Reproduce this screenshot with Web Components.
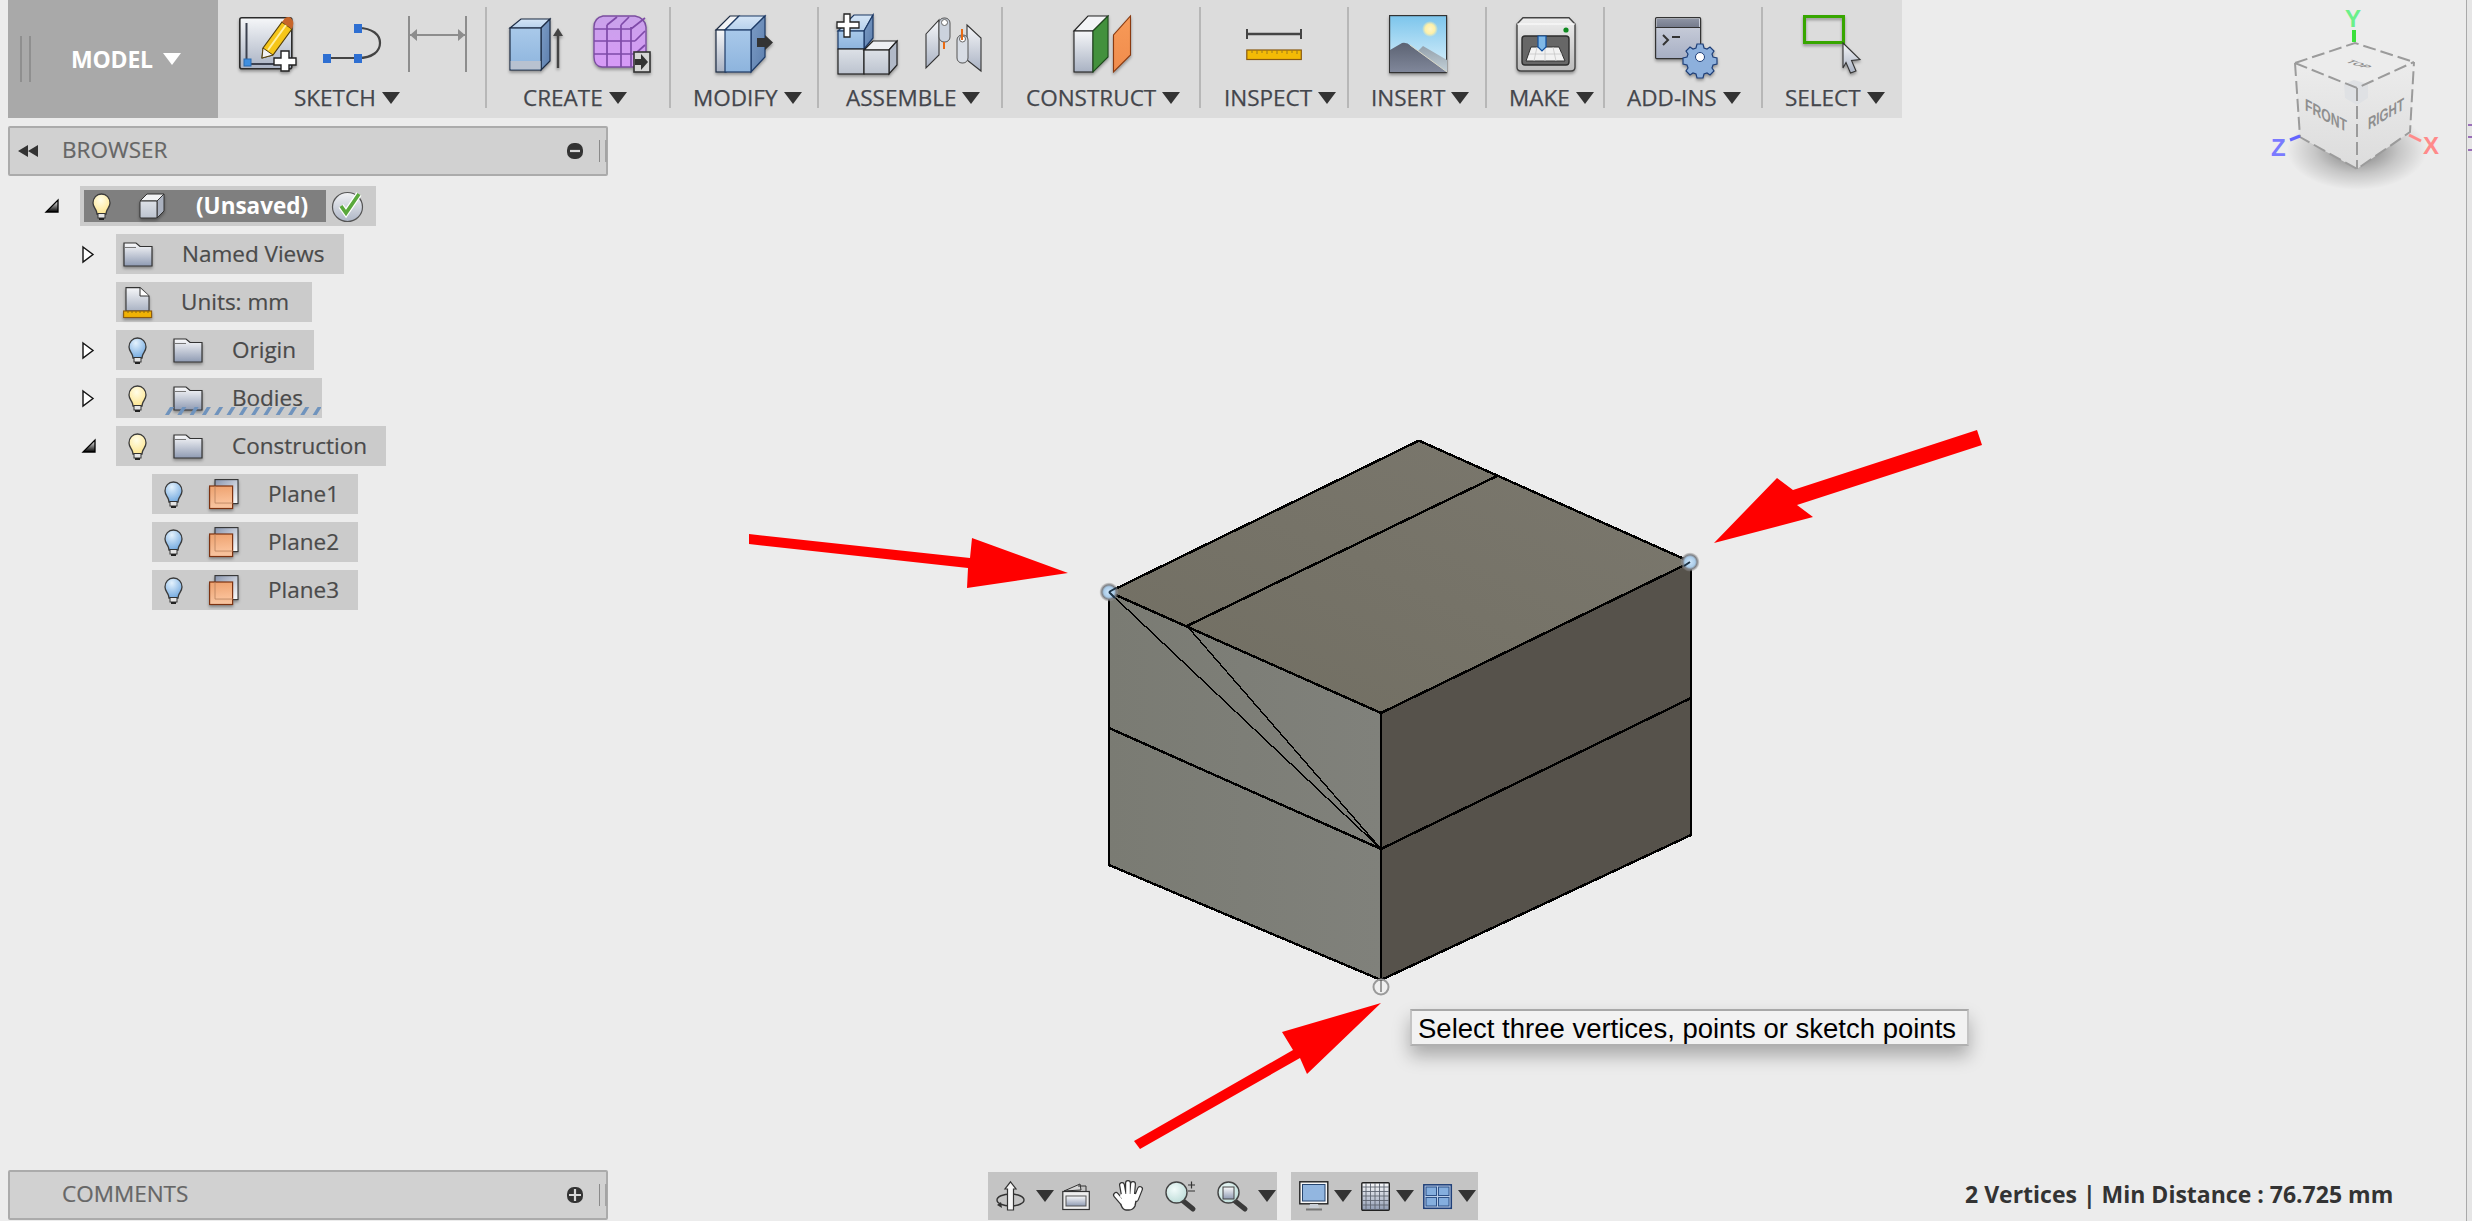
<!DOCTYPE html>
<html>
<head>
<meta charset="utf-8">
<title>Fusion 360</title>
<style>
  html, body { margin: 0; padding: 0; background: #ececec; overflow: hidden; }
  body { font-family: "Open Sans", sans-serif; }
</style>
</head>
<body>
<fx-app>
  <fx-toolbar slot="toolbar">
    <fx-model-tab></fx-model-tab>
    <fx-tool-group label="SKETCH" width="267" pad="21" gap="27.5" label-pad="76"><fx-icon name="sketch"></fx-icon><fx-icon name="spline"></fx-icon><fx-icon name="dimension"></fx-icon></fx-tool-group>
    <fx-tool-group label="CREATE" width="182" pad="22" gap="28" label-pad="36"><fx-icon name="extrude"></fx-icon><fx-icon name="mesh"></fx-icon></fx-tool-group>
    <fx-tool-group label="MODIFY" width="146" pad="44" label-pad="22"><fx-icon name="modify"></fx-icon></fx-tool-group>
    <fx-tool-group label="ASSEMBLE" width="182" pad="18" gap="27" label-pad="27"><fx-icon name="newcomp"></fx-icon><fx-icon name="joint"></fx-icon></fx-tool-group>
    <fx-tool-group label="CONSTRUCT" width="196" pad="70" label-pad="23"><fx-icon name="construct"></fx-icon></fx-tool-group>
    <fx-tool-group label="INSPECT" width="146" pad="45" label-pad="23"><fx-icon name="inspect"></fx-icon></fx-tool-group>
    <fx-tool-group label="INSERT" width="136" pad="40" label-pad="22"><fx-icon name="insert"></fx-icon></fx-tool-group>
    <fx-tool-group label="MAKE" width="116" pad="29" label-pad="22"><fx-icon name="make"></fx-icon></fx-tool-group>
    <fx-tool-group label="ADD-INS" width="156" pad="50" label-pad="22"><fx-icon name="addins"></fx-icon></fx-tool-group>
    <fx-tool-group label="SELECT" width="139" pad="40" label-pad="22" last><fx-icon name="select"></fx-icon></fx-tool-group>
  </fx-toolbar>

  <fx-panel-bar slot="browser" label="BROWSER" mode="minus" back></fx-panel-bar>

  <fx-tree slot="tree">
    <fx-tree-root label="(Unsaved)"></fx-tree-root>
    <fx-tree-row left="116" width="228" pad="7" expander="closed" label="Named Views"><fx-icon name="folder"></fx-icon></fx-tree-row>
    <fx-tree-row left="116" width="196" pad="7" label="Units: mm"><fx-icon name="doc"></fx-icon></fx-tree-row>
    <fx-tree-row left="116" width="198" pad="12" expander="closed" label="Origin"><fx-icon name="bulbblue"></fx-icon><fx-icon name="folder"></fx-icon></fx-tree-row>
    <fx-tree-row left="116" width="206" pad="12" expander="closed" label="Bodies" wave><fx-icon name="bulb"></fx-icon><fx-icon name="folder"></fx-icon></fx-tree-row>
    <fx-tree-row left="116" width="270" pad="12" expander="open" label="Construction"><fx-icon name="bulb"></fx-icon><fx-icon name="folder"></fx-icon></fx-tree-row>
    <fx-tree-row left="152" width="206" pad="12" label="Plane1"><fx-icon name="bulbblue"></fx-icon><fx-icon name="plane"></fx-icon></fx-tree-row>
    <fx-tree-row left="152" width="206" pad="12" label="Plane2"><fx-icon name="bulbblue"></fx-icon><fx-icon name="plane"></fx-icon></fx-tree-row>
    <fx-tree-row left="152" width="206" pad="12" label="Plane3"><fx-icon name="bulbblue"></fx-icon><fx-icon name="plane"></fx-icon></fx-tree-row>
  </fx-tree>

  <fx-bottom slot="bottom">
    <fx-panel-bar label="COMMENTS" mode="plus"></fx-panel-bar>
    <fx-nav-bar width="289" style="margin-left:380px">
      <fx-icon name="orbit" style="margin-left:8px"></fx-icon>
      <fx-icon name="tri" style="margin-left:11px"></fx-icon>
      <fx-icon name="lookat" style="margin-left:8px"></fx-icon>
      <fx-icon name="hand" style="margin-left:23px"></fx-icon>
      <fx-icon name="zoom" style="margin-left:22px"></fx-icon>
      <fx-icon name="fit" style="margin-left:21px"></fx-icon>
      <fx-icon name="tri" style="margin-left:11px"></fx-icon>
    </fx-nav-bar>
    <fx-nav-bar width="187" style="margin-left:14px">
      <fx-icon name="monitor" style="margin-left:8px"></fx-icon>
      <fx-icon name="tri" style="margin-left:5px"></fx-icon>
      <fx-icon name="gridview" style="margin-left:9px"></fx-icon>
      <fx-icon name="tri" style="margin-left:6px"></fx-icon>
      <fx-icon name="viewports" style="margin-left:9px"></fx-icon>
      <fx-icon name="tri" style="margin-left:6px"></fx-icon>
    </fx-nav-bar>
    <fx-status text="2 Vertices | Min Distance : 76.725 mm"></fx-status>
  </fx-bottom>

  <fx-scene slot="overlay"></fx-scene>
  <fx-viewcube slot="overlay"></fx-viewcube>
  <fx-tip slot="overlay">Select three vertices, points or sketch points</fx-tip>
</fx-app>

<script>
const DEFS = `<defs>
<linearGradient id="steel" x1="0" y1="0" x2="0" y2="1"><stop offset="0" stop-color="#f6f7f9"/><stop offset="1" stop-color="#a9b2c3"/></linearGradient>
<linearGradient id="folderfill" x1="0" y1="0" x2="0" y2="1"><stop offset="0" stop-color="#fbfbfc"/><stop offset="1" stop-color="#8f9bb3"/></linearGradient>
<linearGradient id="pale" x1="0" y1="0" x2="0" y2="1"><stop offset="0" stop-color="#dde1e7"/><stop offset="1" stop-color="#bcc3cf"/></linearGradient>
<linearGradient id="blue" x1="0" y1="0" x2="0" y2="1"><stop offset="0" stop-color="#a9c9ea"/><stop offset="1" stop-color="#8db4dd"/></linearGradient>
<linearGradient id="bluetop" x1="0" y1="0" x2="0" y2="1"><stop offset="0" stop-color="#d5e5f6"/><stop offset="1" stop-color="#b7d1ec"/></linearGradient>
<linearGradient id="blueside" x1="0" y1="0" x2="1" y2="1"><stop offset="0" stop-color="#7c9cc5"/><stop offset="1" stop-color="#5d7fae"/></linearGradient>
<linearGradient id="purple" x1="0" y1="0" x2="0" y2="1"><stop offset="0" stop-color="#c9a2ea"/><stop offset="1" stop-color="#d79af7"/></linearGradient>
<linearGradient id="orange" x1="0" y1="0" x2="0" y2="1"><stop offset="0" stop-color="#f2a26c"/><stop offset="1" stop-color="#ffc9a3"/></linearGradient>
<linearGradient id="orangeside" x1="0" y1="0" x2="0" y2="1"><stop offset="0" stop-color="#f79a58"/><stop offset="1" stop-color="#f08c4c"/></linearGradient>
<linearGradient id="planeback" x1="0" y1="0" x2="1" y2="1"><stop offset="0" stop-color="#8794ae"/><stop offset="1" stop-color="#ffffff"/></linearGradient>
<linearGradient id="sky" x1="0" y1="0" x2="0" y2="1"><stop offset="0" stop-color="#7cc5ec"/><stop offset="1" stop-color="#e0f3fc"/></linearGradient>
<linearGradient id="mount" x1="0" y1="0" x2="0" y2="1"><stop offset="0" stop-color="#5c6373"/><stop offset="1" stop-color="#80879a"/></linearGradient>
<linearGradient id="mountb" x1="0" y1="0" x2="0" y2="1"><stop offset="0" stop-color="#93a0ab"/><stop offset="1" stop-color="#c4d1d8"/></linearGradient>
<linearGradient id="window" x1="0" y1="0" x2="0" y2="1"><stop offset="0" stop-color="#cfd3de"/><stop offset="1" stop-color="#a7afc4"/></linearGradient>
<linearGradient id="titlebar" x1="0" y1="0" x2="0" y2="1"><stop offset="0" stop-color="#8d93a3"/><stop offset="1" stop-color="#757b8c"/></linearGradient>
<linearGradient id="body" x1="0" y1="0" x2="0" y2="1"><stop offset="0" stop-color="#eeeeee"/><stop offset="1" stop-color="#bcbcbc"/></linearGradient>
<linearGradient id="open" x1="0" y1="0" x2="0" y2="1"><stop offset="0" stop-color="#ffffff"/><stop offset="1" stop-color="#000000"/></linearGradient>
<linearGradient id="checkfill" x1="0" y1="0" x2="0" y2="1"><stop offset="0" stop-color="#f2f3f5"/><stop offset="1" stop-color="#aeb6c6"/></linearGradient>
<radialGradient id="bulbfill" cx=".45" cy=".3" r=".75"><stop offset="0" stop-color="#fffde8"/><stop offset="1" stop-color="#fde48a"/></radialGradient>
<radialGradient id="bulbbluefill" cx=".4" cy=".25" r=".8"><stop offset="0" stop-color="#e4f2fd"/><stop offset="1" stop-color="#6ea6de"/></radialGradient>
<radialGradient id="sun" cx=".5" cy=".5" r=".5"><stop offset="0" stop-color="#fff6c8"/><stop offset=".6" stop-color="#fdf0a8"/><stop offset="1" stop-color="#fdf0a8" stop-opacity="0"/></radialGradient>
<radialGradient id="glass" cx=".4" cy=".35" r=".7"><stop offset="0" stop-color="#f2fbfa"/><stop offset="1" stop-color="#bcdcd8"/></radialGradient>
</defs>`;

const BULB = fill => `<path d="M9.5 1C4.5 1 1 5 1 10c0 3.500 2.500 5.500 3.500 8.500l.5 2.500h9l.5-2.500c1-3 3.500-5 3.500-8.500C18 5 14.500 1 9.500 1z" fill="url(#${fill})" stroke="#3a3a3a" stroke-width="1.300"/><rect x="6" y="20.500" width="7" height="4.500" fill="#e4e4e4" stroke="#333"/><rect x="7" y="25" width="5" height="2" fill="#222"/>`;

const ICONS = {
  tri: [18, 12, `<path d="M0 0H18L9 12z" fill="#333"/>`],
  sketch: [56, 54, `<rect x=".8" y=".8" width="52" height="51" rx="2" fill="url(#steel)" stroke="#2b2b2b" stroke-width="1.600"/>
    <path d="M7.500 6V47H35" fill="none" stroke="#3c4250" stroke-width="2"/><rect x="5" y="42" width="7" height="7" fill="#3f8fe0" stroke="#2b6bb0"/>
    <path d="M24 31L43 5l10 7-19 26-11 3z" fill="#f6c619" stroke="#55400c" stroke-width="1.200"/><path d="M29 33L47 8" stroke="#fff0a0" stroke-width="2"/><path d="M24 31l-1 10 11-3z" fill="#f2f2f2" stroke="#55400c"/>
    <path d="M43 5l3-4q4-2 6 0l2 3q1 3-1 8z" fill="#c8662a"/>
    <path d="M42 34h8v7h7v7h-7v6h-8v-6h-7v-7h7z" fill="#fff" stroke="#222" stroke-width="1.400"/>`],
  spline: [58, 40, `<path d="M4 34H35C50 34 57 27 57 19C57 11 50 4 35 4" fill="none" stroke="#444" stroke-width="2.200"/>
    <rect x="0" y="30" width="8" height="9" fill="#2e6fd2"/><rect x="31" y="30" width="8" height="9" fill="#2e6fd2"/><rect x="31" y="0" width="8" height="9" fill="#2e6fd2"/>`],
  dimension: [59, 56, `<path d="M1 0V56M58 0V56" stroke="#8d8d8d" stroke-width="2"/><path d="M2 19H57" stroke="#8d8d8d" stroke-width="2"/><path d="M2 19L9 13V25zM57 19L50 13V25z" fill="#8d8d8d"/>`],
  extrude: [56, 53, `<path d="M1 10L12 1H41L32 10z" fill="url(#bluetop)" stroke="#1d2c44" stroke-width="1.200"/><path d="M32 10L41 1V43L32 52z" fill="url(#blueside)" stroke="#1d2c44" stroke-width="1.200"/>
    <rect x="1" y="10" width="31" height="42" fill="url(#blue)" stroke="#1d2c44" stroke-width="1.200"/><rect x="1.600" y="43" width="30" height="8.400" fill="#b8c2d0"/>
    <path d="M49 50V14" stroke="#444" stroke-width="2.400"/><path d="M49 10l5 8H44z" fill="#444"/>`],
  mesh: [58, 58, `<path d="M10 1H42Q52 3 53 12V40Q52 50 42 52H9Q1 51 1 42V12Q1 3 10 1z" fill="url(#purple)" stroke="#7b4ea0" stroke-width="1.400"/>
    <path d="M1 14H38M1 26H42M1 39H42M14 10V52M28 10V52M38 12V52M38 14L52 3M42 26L52 16M42 39L52 30M14 10L24 2M28 10L36 2" fill="none" stroke="#7e4aa8" stroke-width="1.700"/>
    <rect x="41" y="37" width="16" height="20" fill="#d6d6d6" stroke="#333" stroke-width="1.600"/><path d="M42 44H48V39L55 47L48 55V50H42z" fill="#333"/>`],
  modify: [58, 58, `<path d="M1 15L15 1H24L10 15z" fill="#f3f4f6" stroke="#1d2c44" stroke-width="1.200"/><rect x="1" y="15" width="10" height="42" fill="url(#steel)" stroke="#1d2c44" stroke-width="1.200"/>
    <path d="M10 15L24 1H50L36 15z" fill="url(#bluetop)" stroke="#1d3a66" stroke-width="1.200"/><path d="M36 15L50 1V42L36 57z" fill="url(#blueside)" stroke="#1d3a66" stroke-width="1.200"/>
    <rect x="10" y="15" width="26" height="42" fill="url(#blue)" stroke="#1d3a66" stroke-width="1.200"/><path d="M42 23H50V20L58 27.500L50 35V32H42z" fill="#333"/>`],
  newcomp: [61, 61, `<path d="M1 17L17 1H36L27 17z" fill="url(#bluetop)" stroke="#1d3a66" stroke-width="1.200"/><path d="M27 17L36 1V24L27 35z" fill="url(#blueside)" stroke="#1d3a66" stroke-width="1.200"/>
    <rect x="1" y="17" width="26" height="18" fill="url(#blue)" stroke="#1d3a66" stroke-width="1.200"/>
    <rect x="1" y="35" width="26" height="25" fill="url(#pale)" stroke="#222" stroke-width="1.200"/>
    <path d="M27 36L36 27H60L52 36z" fill="#eef0f3" stroke="#222" stroke-width="1.200"/><path d="M52 36L60 27V51L52 60z" fill="#b1b9c7" stroke="#222" stroke-width="1.200"/><rect x="27" y="36" width="25" height="24" fill="url(#pale)" stroke="#222" stroke-width="1.200"/>
    <path d="M7 0h6v8h9v6h-9v9H7v-9H0V8h7z" fill="#fff" stroke="#222" stroke-width="1.300"/>`],
  joint: [57, 55, `<path d="M1 17L14 3V38L1 51z" fill="url(#steel)" stroke="#333" stroke-width="1.100"/><rect x="14" y="1" width="11" height="24" rx="5" fill="#cbd2dd" stroke="#555"/><circle cx="19.500" cy="5.500" r="3" fill="#fff" stroke="#666"/>
    <path d="M19 25V32" stroke="#ea6a12" stroke-width="2"/><path d="M42 8L56 21V54L42 43z" fill="url(#steel)" stroke="#333" stroke-width="1.100"/>
    <rect x="32" y="18" width="11" height="28" rx="5" fill="#d8dde5" stroke="#555"/><circle cx="37.500" cy="22" r="3" fill="#fff" stroke="#666"/><path d="M37 12V23" stroke="#ea6a12" stroke-width="2"/>`],
  construct: [58, 58, `<path d="M1 16L15 1H35L20 16z" fill="#f3f4f6" stroke="#222" stroke-width="1.100"/><rect x="1" y="16" width="19" height="41" fill="url(#steel)" stroke="#222" stroke-width="1.100"/>
    <path d="M20 16L35 1V42L20 57z" fill="#43913d" stroke="#1e4a1c" stroke-width="1.100"/><path d="M57.500 1V40L40.500 57V20z" fill="url(#orangeside)" stroke="#8a3a10" stroke-width="1.100"/>`],
  inspect: [56, 31, `<path d="M1 0V10M55 0V10" stroke="#444" stroke-width="2"/><path d="M1 5H55" stroke="#444" stroke-width="2.400"/>
    <rect x=".8" y="21" width="54.500" height="9.500" fill="#f3bb05" stroke="#8a5a10" stroke-width="1.200"/>
    <path d="M6 21v3M11 21v4M16 21v3M21 21v4M26 21v3M31 21v4M36 21v3M41 21v4M46 21v3M51 21v4" stroke="#9b7a20"/>`],
  insert: [58, 58, `<rect x=".6" y=".6" width="57" height="57" fill="url(#sky)" stroke="#333" stroke-width="1.200"/><ellipse cx="41" cy="14" rx="8" ry="8" fill="url(#sun)"/>
    <path d="M25 40L34 31L58 45V57H35z" fill="url(#mountb)"/><path d="M1 35L13 28Q18 27 22 31L58 57H1z" fill="url(#mount)"/><path d="M21 30L58 57" stroke="#d9d8c8" stroke-width="1"/>`],
  make: [60, 55, `<path d="M7 .8H53L59 7V50Q59 54 55 54H5Q1 54 1 50V7z" fill="url(#body)" stroke="#444" stroke-width="1.400"/><path d="M1 7H59" stroke="#fff"/>
    <rect x="6" y="19" width="47" height="29" rx="3" fill="#676767" stroke="#2d2d2d" stroke-width="1.400"/><circle cx="50" cy="13" r="2.600" fill="#0e8a1f"/>
    <path d="M15 30H43L49 44H10z" fill="#f2f2f2" stroke="#333"/><path d="M13 37H46M21 30L18 44M29 30V44M37 30L40 44" stroke="#c7c7c7" stroke-width=".8"/>
    <path d="M22 19H30V30L26 34L22 30z" fill="#7fb8e6" stroke="#0f4fa0" stroke-width="1.200"/>`],
  addins: [58, 54, `<rect x=".6" y=".6" width="45" height="41" rx="1" fill="url(#window)" stroke="#333" stroke-width="1.200"/><rect x="2" y="2" width="42" height="8" fill="url(#titlebar)"/><path d="M1 10.500H45" stroke="#333"/>
    <path d="M8 18L13 23L8 28" fill="none" stroke="#333" stroke-width="2"/><path d="M17 20H25" stroke="#333" stroke-width="2"/>
    <g transform="translate(45 40)"><path d="M-3-13h6l1 4 3 1 3-2 4 4-2 3 1 3 4 1v6l-4 1-1 3 2 3-4 4-3-2-3 1-1 4h-6l-1-4-3-1-3 2-4-4 2-3-1-3-4-1v-6l4-1 1-3-2-3 4-4 3 2 3-1z" fill="#8db0dc" stroke="#1f3f78" stroke-width="1.200"/><circle r="4.500" fill="#fff" stroke="#1f3f78"/></g>`],
  select: [58, 58, `<rect x="1.500" y="1.500" width="39" height="26" fill="none" stroke="#37a600" stroke-width="3"/>
    <path d="M40 28L57 44.500L48.500 45.500L53 56L47.500 58L43 47.500L40 53z" fill="url(#steel)" stroke="#333" stroke-width="1.100"/>`],
  bulb: [19, 27, BULB('bulbfill')],
  bulbblue: [19, 27, BULB('bulbbluefill')],
  folder: [30, 25, `<path d="M1 24V1H13L17 4.500H29V24z" fill="url(#folderfill)" stroke="#333" stroke-width="1.200"/><path d="M1.500 5.500H13" stroke="#777" stroke-width="1"/>`],
  doc: [29, 31, `<path d="M3 24V.6H17L26 9V24z" fill="url(#steel)" stroke="#333" stroke-width="1.100"/><path d="M17 1V9H26" fill="#fff" stroke="#333"/>
    <rect x=".6" y="24" width="28" height="6.500" fill="#f0b204" stroke="#8a5a10" stroke-width="1.100"/><path d="M5 24v2M9 24v2M13 24v2M17 24v2M21 24v2M25 24v2" stroke="#8a6a10"/>`],
  cube: [26, 26, `<path d="M1 8L8 1H25L18 8z" fill="#f2f3f5" stroke="#333"/><path d="M18 8L25 1V18L18 25z" fill="#aab1bf" stroke="#333"/><rect x="1" y="8" width="17" height="17" rx="1" fill="url(#pale)" stroke="#333"/>`],
  check: [32, 31, `<ellipse cx="15.500" cy="16" rx="15" ry="14.500" fill="url(#checkfill)" stroke="#555" stroke-width="1.200"/><path d="M9 15L14 22L27 3" fill="none" stroke="#fff" stroke-width="6"/><path d="M9 15L14 22L27 3" fill="none" stroke="#5aa83c" stroke-width="3.600"/>`],
  plane: [30, 30, `<rect x="6" y=".6" width="23" height="24" fill="url(#planeback)" stroke="#333" stroke-width="1.100"/><rect x=".6" y="7" width="23" height="22.500" fill="url(#orange)" fill-opacity=".95" stroke="#7d3210" stroke-width="1.200"/><path d="M6 7V24H24" fill="none" stroke="#b9835f" stroke-width=".8"/>`],
  closed: [12, 17, `<path d="M1 1L11 8.500L1 16z" fill="#fff" stroke="#111" stroke-width="1.400"/>`],
  opened: [14, 14, `<path d="M13 1V13H1z" fill="url(#open)" stroke="#000" stroke-width="1.300"/>`],
  orbit: [29, 30, `<ellipse cx="14.500" cy="19" rx="13.500" ry="6" fill="none" stroke="#333" stroke-width="1.400"/><path d="M5 21l-4 3 5 3z" fill="#333"/>
    <path d="M14.500 .8L20 8H17.500V29H11.500V8H9z" fill="#f6f6f6" stroke="#333" stroke-width="1.200"/>`],
  lookat: [28, 27, `<path d="M2 8L18 1L19 7z" fill="#d5d5d5" stroke="#333"/><path d="M16 3L24 3V8" fill="none" stroke="#333"/><rect x=".8" y="8.500" width="26.500" height="18" fill="#eeeeee" stroke="#333" stroke-width="1.200"/><rect x="4" y="13" width="20" height="10" fill="url(#folderfill)" stroke="#555"/>`],
  hand: [30, 30, `<g fill="none" stroke-linecap="round"><path d="M9 21L3 14M11 15L9 4M15 15V2M19 15L20 3M23 18L27 8" stroke="#333" stroke-width="6"/>
    <path d="M8 15H24L22 25Q20 29 16 29H13Q10 29 8 24z" fill="#fff" stroke="#333" stroke-width="1.400"/><path d="M9 21L3 14M11 15L9 4M15 15V2M19 15L20 3M23 18L27 8" stroke="#fff" stroke-width="3.600"/><path d="M9 15H22" stroke="#fff" stroke-width="4"/></g>`],
  zoom: [31, 30, `<path d="M17 19L28 28" stroke="#3a3a3a" stroke-width="5" stroke-linecap="round"/><circle cx="11.500" cy="11.500" r="10.500" fill="url(#glass)" stroke="#444" stroke-width="1.400"/>
    <path d="M23 4H30M26.500 .5V7.500M23 10H30" stroke="#333" stroke-width="1.200"/>`],
  fit: [30, 30, `<path d="M18 20L28 28" stroke="#3a3a3a" stroke-width="5" stroke-linecap="round"/><circle cx="11.500" cy="11.500" r="10.500" fill="url(#glass)" stroke="#444" stroke-width="1.400"/><rect x="6" y="6" width="11" height="12" fill="url(#folderfill)" stroke="#444"/>`],
  monitor: [30, 30, `<rect x=".8" y=".8" width="28" height="22" fill="#f7f7f7" stroke="#222" stroke-width="1.400"/><rect x="3.500" y="3.500" width="22.500" height="16.500" fill="#92b6e0" stroke="#26456f"/><path d="M11 23H19L20 27H10z" fill="#c9ced6"/><path d="M7 28.500H23" stroke="#777" stroke-width="2"/>`],
  gridview: [29, 29, `<rect x=".8" y=".8" width="27.500" height="27.500" rx="1" fill="url(#folderfill)" stroke="#222" stroke-width="1.400"/><path d="M5 1V28M9.500 1V28M14 1V28M18.500 1V28M23 1V28M1 5H28M1 9.500H28M1 14H28M1 18.500H28M1 23H28" stroke="#5d6470" stroke-width=".9"/>`],
  viewports: [29, 25, `<rect x=".8" y=".8" width="27.500" height="23.500" fill="#b8cde8" stroke="#1f3f78" stroke-width="1.500"/><rect x="3" y="3" width="10.500" height="8.500" fill="#84aede" stroke="#2e5288" stroke-width="1"/><rect x="15.500" y="3" width="10.500" height="8.500" fill="#84aede" stroke="#2e5288" stroke-width="1"/><rect x="3" y="13.500" width="10.500" height="8.500" fill="#84aede" stroke="#2e5288" stroke-width="1"/><rect x="15.500" y="13.500" width="10.500" height="8.500" fill="#84aede" stroke="#2e5288" stroke-width="1"/>`],
};
const SOFT_SHADOW = ['sketch','extrude','mesh','modify','newcomp','construct','insert','make','addins','select','folder','doc','cube','plane'];

class FxIcon extends HTMLElement {
  connectedCallback() {
    const name = this.getAttribute('name');
    const [w, h, body] = ICONS[name];
    const shadow = SOFT_SHADOW.includes(name) ? 'filter:drop-shadow(0 2px 1.500px rgba(0,0,0,.35));' : '';
    this.attachShadow({mode: 'open'}).innerHTML = `
      <style>:host { display: block; flex: none; width: ${w}px; height: ${h}px; line-height: 0; }
      svg { overflow: visible; ${shadow} }</style>
      <svg width="${w}" height="${h}" viewBox="0 0 ${w} ${h}">${DEFS}${body}</svg>`;
  }
}
customElements.define('fx-icon', FxIcon);

class FxApp extends HTMLElement {
  constructor() {
    super();
    this.attachShadow({mode: 'open'}).innerHTML = `
      <style>
        :host { display: flex; flex-direction: column; position: relative; width: 2472px; height: 1221px;
                background: #ececec; overflow: hidden; }
        .spacer { flex: 1; }
        .edge { position: absolute; top: 0; right: 0; bottom: 0; width: 5px; background: #e6e6e6; border-left: 1px solid #a9a9a9; }
      </style>
      <slot name="overlay"></slot>
      <slot name="toolbar"></slot>
      <slot name="browser"></slot>
      <slot name="tree"></slot>
      <div class="spacer"></div>
      <slot name="bottom"></slot>
      <div class="edge"></div>`;
  }
}
customElements.define('fx-app', FxApp);

class FxToolbar extends HTMLElement {
  constructor() {
    super();
    this.attachShadow({mode: 'open'}).innerHTML = `
      <style>:host { display: flex; flex: none; margin-left: 8px; width: 1894px; height: 118px; background: #dcdcdc; }</style>
      <slot></slot>`;
  }
}
customElements.define('fx-toolbar', FxToolbar);

class FxModelTab extends HTMLElement {
  constructor() {
    super();
    this.attachShadow({mode: 'open'}).innerHTML = `
      <style>
        :host { display: flex; align-items: center; flex: none; width: 210px; height: 118px; background: #a9a9a9; box-sizing: border-box; padding-left: 12px; }
        .grip { width: 7px; height: 46px; border-left: 2px solid #8f8f8f; border-right: 2px solid #8f8f8f; }
        span { margin-left: 40px; color: #fff; font: 700 23px "Open Sans", sans-serif; letter-spacing: -.2px; }
        svg { margin-left: 10px; }
      </style>
      <div class="grip"></div><span>MODEL</span>
      <svg width="18" height="12"><path d="M0 0H18L9 12z" fill="#fff"/></svg>`;
  }
}
customElements.define('fx-model-tab', FxModelTab);

class FxToolGroup extends HTMLElement {
  connectedCallback() {
    const a = n => this.getAttribute(n);
    this.attachShadow({mode: 'open'}).innerHTML = `
      <style>
        :host { display: flex; flex: none; width: ${+a('width') + (this.hasAttribute('last') ? 0 : 2)}px; height: 118px; }
        .col { width: ${a('width')}px; flex: none; }
        .icons { display: flex; align-items: center; height: 88px; padding-left: ${a('pad')}px; gap: ${a('gap') || 0}px; }
        .label { display: flex; align-items: center; height: 20px; padding-left: ${a('label-pad')}px; color: #44464c;
                 font: 400 22.500px/20px "Open Sans", sans-serif; white-space: nowrap; -webkit-text-stroke: .25px #44464c; }
        .label svg { margin-left: 6px; margin-top: -1px; flex: none; }
        .sep { width: 2px; margin: 7px 0 10px; background: #b7b7b7; }
      </style>
      <div class="col">
        <div class="icons"><slot></slot></div>
        <div class="label"><span>${a('label')}</span><svg width="18" height="12"><path d="M0 0H18L9 12z" fill="#333"/></svg></div>
      </div>
      ${this.hasAttribute('last') ? '' : '<div class="sep"></div>'}`;
  }
}
customElements.define('fx-tool-group', FxToolGroup);

class FxPanelBar extends HTMLElement {
  connectedCallback() {
    const plus = this.getAttribute('mode') === 'plus';
    const back = this.hasAttribute('back')
      ? `<svg class="back" width="20" height="12"><path d="M10 0V12L0 6zM20 0V12L10 6z" fill="#333"/></svg>` : '';
    this.attachShadow({mode: 'open'}).innerHTML = `
      <style>
        :host { display: flex; align-items: center; flex: none; box-sizing: border-box; position: relative; width: 600px; height: 50px;
                margin: 8px 0 0 8px; background: #d1d1d1; border: 2px solid #ababab; border-radius: 2px; color: #666; }
        :host([mode="plus"]) { margin: 0 0 0 8px; }
        .back { position: absolute; left: 8px; top: 17px; }
        span { position: absolute; left: 52px; margin-top: -3px; font: 400 22.500px "Open Sans", sans-serif; -webkit-text-stroke: .2px #666; }
        .btn { position: absolute; left: 557px; top: 15px; width: 16px; height: 16px; border-radius: 7px; background: #333; }
        .btn svg { display: block; }
        .grip { position: absolute; left: 589px; top: 12px; width: 5px; height: 22px; border-left: 1px solid #8a8a8a; border-right: 2px solid #a4a4a4; }
      </style>
      ${back}<span>${this.getAttribute('label')}</span>
      <div class="btn"><svg width="16" height="16"><path d="${plus ? 'M2 8H14M8 2V14' : 'M3 8H13'}" stroke="#d8d8d8" stroke-width="2.200"/></svg></div>
      <div class="grip"></div>`;
  }
}
customElements.define('fx-panel-bar', FxPanelBar);

class FxTree extends HTMLElement {
  constructor() {
    super();
    this.attachShadow({mode: 'open'}).innerHTML = `
      <style>:host { display: flex; flex-direction: column; gap: 8px; flex: none; margin-top: 10px; }</style>
      <slot></slot>`;
  }
}
customElements.define('fx-tree', FxTree);

class FxTreeRoot extends HTMLElement {
  connectedCallback() {
    this.attachShadow({mode: 'open'}).innerHTML = `
      <style>
        :host { display: flex; align-items: center; height: 40px; padding-left: 45px; }
        .exp { width: 35px; }
        .bar { display: flex; align-items: center; box-sizing: border-box; width: 296px; height: 40px; padding-left: 4px; background: #cbcbcb; }
        .dark { display: flex; align-items: center; width: 242px; height: 32px; background: #7f7f7f; padding-left: 8px; box-sizing: border-box; color: #fff; }
        .dark fx-icon + fx-icon { margin-left: 28px; }
        span { margin-left: 31px; padding-bottom: 2px; font: 700 22.500px "Open Sans", sans-serif; white-space: nowrap; }
        .chk { margin-left: 6px; }
      </style>
      <div class="exp"><fx-icon name="opened"></fx-icon></div>
      <div class="bar">
        <div class="dark"><fx-icon name="bulb"></fx-icon><fx-icon name="cube"></fx-icon><span>${this.getAttribute('label')}</span></div>
        <fx-icon class="chk" name="check"></fx-icon>
      </div>`;
  }
}
customElements.define('fx-tree-root', FxTreeRoot);

class FxTreeRow extends HTMLElement {
  connectedCallback() {
    const a = n => this.getAttribute(n);
    const exp = a('expander');
    const expIcon = exp === 'open' ? 'opened' : exp === 'closed' ? 'closed' : '';
    let wave = '';
    if (this.hasAttribute('wave')) {
      for (let x = 0; x < 152; x += 12.300) wave += `<path d="M${x} 8L${x + 5} 0H${x + 9}L${x + 4} 8z" fill="#6f93bd"/>`;
      wave = `<svg class="wave" width="156" height="8">${wave}</svg>`;
    }
    this.attachShadow({mode: 'open'}).innerHTML = `
      <style>
        :host { display: flex; align-items: center; height: 40px; padding-left: ${a('left') - 36}px; }
        .exp { width: 36px; flex: none; padding-left: 2px; box-sizing: border-box; }
        .bar { position: relative; display: flex; align-items: center; box-sizing: border-box; width: ${a('width')}px; height: 40px;
               padding-left: ${a('pad')}px; background: #cbcbcb; color: #4a4a4a; gap: 26px; }
        span { margin-left: 3px; padding-bottom: 2px; font: 400 22.500px "Open Sans", sans-serif; white-space: nowrap; -webkit-text-stroke: .2px #4a4a4a; }
        .wave { position: absolute; left: 49px; top: 29px; }
      </style>
      <div class="exp">${expIcon ? `<fx-icon name="${expIcon}"></fx-icon>` : ''}</div>
      <div class="bar"><slot></slot><span>${a('label')}</span>${wave}</div>`;
  }
}
customElements.define('fx-tree-row', FxTreeRow);

class FxBottom extends HTMLElement {
  constructor() {
    super();
    this.attachShadow({mode: 'open'}).innerHTML = `
      <style>:host { display: flex; flex: none; align-items: flex-start; height: 51px; }</style>
      <slot></slot>`;
  }
}
customElements.define('fx-bottom', FxBottom);

class FxNavBar extends HTMLElement {
  connectedCallback() {
    this.attachShadow({mode: 'open'}).innerHTML = `
      <style>:host { display: flex; align-items: center; flex: none; width: ${this.getAttribute('width')}px; height: 48px; margin-top: 2px; background: #c4c4c4; }</style>
      <slot></slot>`;
  }
}
customElements.define('fx-nav-bar', FxNavBar);

class FxStatus extends HTMLElement {
  connectedCallback() {
    this.attachShadow({mode: 'open'}).innerHTML = `
      <style>:host { display: block; flex: none; margin: 6px 0 0 487px; color: #333; font: 700 23px/36px "Open Sans", sans-serif; white-space: nowrap; }</style>
      ${this.getAttribute('text')}`;
  }
}
customElements.define('fx-status', FxStatus);

class FxTip extends HTMLElement {
  constructor() {
    super();
    this.attachShadow({mode: 'open'}).innerHTML = `
      <style>
        :host { position: absolute; left: 1410px; top: 1009px; box-sizing: border-box; width: 559px; height: 37px; padding-left: 6px;
                background: #f2f2f2; border: 2px solid #c4c4c4; border-top-color: #a8a8a8; border-bottom-color: #b0b0b0; color: #000; z-index: 3;
                font: 400 27.500px/35px "Liberation Sans", sans-serif; white-space: nowrap; box-shadow: 0 10px 18px rgba(0,0,0,.28); }
      </style>
      <slot></slot>`;
  }
}
customElements.define('fx-tip', FxTip);

class FxScene extends HTMLElement {
  constructor() {
    super();
    this.attachShadow({mode: 'open'}).innerHTML = `
      <style>:host { position: absolute; left: 0; top: 0; z-index: 2; width: 2472px; height: 1221px; pointer-events: none; }
      svg { display: block; }</style>
      <svg width="2472" height="1221" viewBox="0 0 2472 1221">
        <defs>
          <linearGradient id="top" x1="0" y1="1" x2="1" y2="0"><stop offset="0" stop-color="#716e62"/><stop offset="1" stop-color="#7b786e"/></linearGradient>
          <linearGradient id="left" x1="0" y1="0" x2="1" y2="0"><stop offset="0" stop-color="#7a7b73"/><stop offset="1" stop-color="#80817b"/></linearGradient>
          <radialGradient id="vtx"><stop offset="0" stop-color="#cfe6fa"/><stop offset=".55" stop-color="#a9cbe8"/><stop offset=".75" stop-color="#7d7f84"/><stop offset="1" stop-color="#9a9a9a" stop-opacity=".2"/></radialGradient>
        </defs>
        <polygon points="1109,592 1418,441 1691,562 1381,713" fill="url(#top)"/>
        <polygon points="1109,592 1381,713 1381,980 1109,865" fill="url(#left)"/>
        <polygon points="1381,713 1691,562 1691,835 1381,980" fill="#56524b"/>
        <g fill="none" stroke="#000" stroke-width="2.400" shape-rendering="crispEdges">
          <path d="M1109 592L1416 442Q1419 440 1422 442L1691 562V835L1381 980L1109 865V592"/>
          <path d="M1109 592L1381 713L1691 562M1381 713V980"/>
          <path d="M1497 476L1187 626"/>
          <path d="M1109 728L1381 849L1691 698"/>
        </g>
        <g fill="none" stroke="#000" stroke-width="1.400" shape-rendering="crispEdges">
          <path d="M1109 592L1381 849M1187 626L1381 849"/>
        </g>
        <circle cx="1109" cy="592" r="9.500" fill="url(#vtx)"/>
        <circle cx="1690" cy="562" r="9.500" fill="url(#vtx)"/>
        <path d="M1109 592L1116 588M1109 592L1115 598M1690 562L1684 566" stroke="#1d3346" stroke-width="2"/>
        <circle cx="1381" cy="987" r="7.500" fill="#f2f2f2" fill-opacity=".5" stroke="#9a9a9a" stroke-width="2"/>
        <path d="M1381 980V992" stroke="#444" stroke-width="1"/>
        <g fill="#ff0000">
          <polygon points="749,534 970,558 972,538 1068,573 967,588 968,568 749,544"/>
          <polygon points="1977,430 1793,490 1777,478 1714,543 1813,517 1797,505 1982,445"/>
          <polygon points="1134,1141 1293,1050 1282,1032 1381,1003 1307,1074 1300,1058 1140,1149"/>
        </g>
        <path d="M2468 125H2472M2468 137H2472M2468 150H2472" stroke="#9a6fb8" stroke-width="2"/>
      </svg>`;
  }
}
customElements.define('fx-scene', FxScene);

class FxViewcube extends HTMLElement {
  constructor() {
    super();
    this.attachShadow({mode: 'open'}).innerHTML = `
      <style>:host { position: absolute; left: 2260px; top: 0; z-index: 2; width: 200px; height: 200px; pointer-events: none; }
      svg { display: block; } text { font-family: "Liberation Sans", sans-serif; }</style>
      <svg width="200" height="200" viewBox="2260 0 200 200">
        <defs>
          <radialGradient id="sh"><stop offset="0" stop-color="#000" stop-opacity=".5"/><stop offset=".6" stop-color="#000" stop-opacity=".16"/><stop offset="1" stop-color="#000" stop-opacity="0"/></radialGradient>
          <linearGradient id="fc" x1="0" y1="0" x2="0" y2="1"><stop offset="0" stop-color="#ececec"/><stop offset="1" stop-color="#dcdcdc"/></linearGradient>
        </defs>
        <ellipse cx="2357" cy="150" rx="70" ry="40" fill="url(#sh)"/>
        <polygon points="2295,63 2355,43 2414,62 2357,88" fill="#ececec"/>
        <polygon points="2295,63 2357,88 2357,169 2300,137" fill="url(#fc)"/>
        <polygon points="2414,62 2357,88 2357,169 2410,132" fill="url(#fc)"/>
        <polygon points="2344,84 2354,80 2368,84 2368,98 2357,105 2345,98" fill="#dfe1e4"/>
        <g fill="none" stroke="#9b9b9b" stroke-width="2" stroke-dasharray="13 5">
          <path d="M2295 63L2355 43L2414 62M2295 63L2357 88L2414 62M2295 63L2300 137L2357 169L2410 132L2414 62M2357 88V169"/>
        </g>
        <text transform="translate(2305 110) skewY(28)" font-size="17" textLength="42" lengthAdjust="spacingAndGlyphs" fill="#8f8f8f" font-weight="700">FRONT</text>
        <text transform="translate(2368 130) skewY(-30)" font-size="17" textLength="36" lengthAdjust="spacingAndGlyphs" fill="#8f8f8f" font-weight="700">RIGHT</text>
        <text transform="matrix(.85 .28 -.85 .28 2345 62)" font-size="12" fill="#8f8f8f" font-weight="700">TOP</text>
        <path d="M2354 30V42" stroke="#3ce03c" stroke-width="4"/>
        <path d="M2290 140L2300 136" stroke="#6464ff" stroke-width="3"/>
        <path d="M2409 135L2421 141" stroke="#ff8a8a" stroke-width="3"/>
        <text x="2345" y="27" font-size="24" font-weight="700" fill="#6bf08a">Y</text>
        <text x="2271" y="156" font-size="24" font-weight="700" fill="#7a7aff">Z</text>
        <text x="2423" y="154" font-size="24" font-weight="700" fill="#ff8a8a">X</text>
      </svg>`;
  }
}
customElements.define('fx-viewcube', FxViewcube);
</script>
</body>
</html>
